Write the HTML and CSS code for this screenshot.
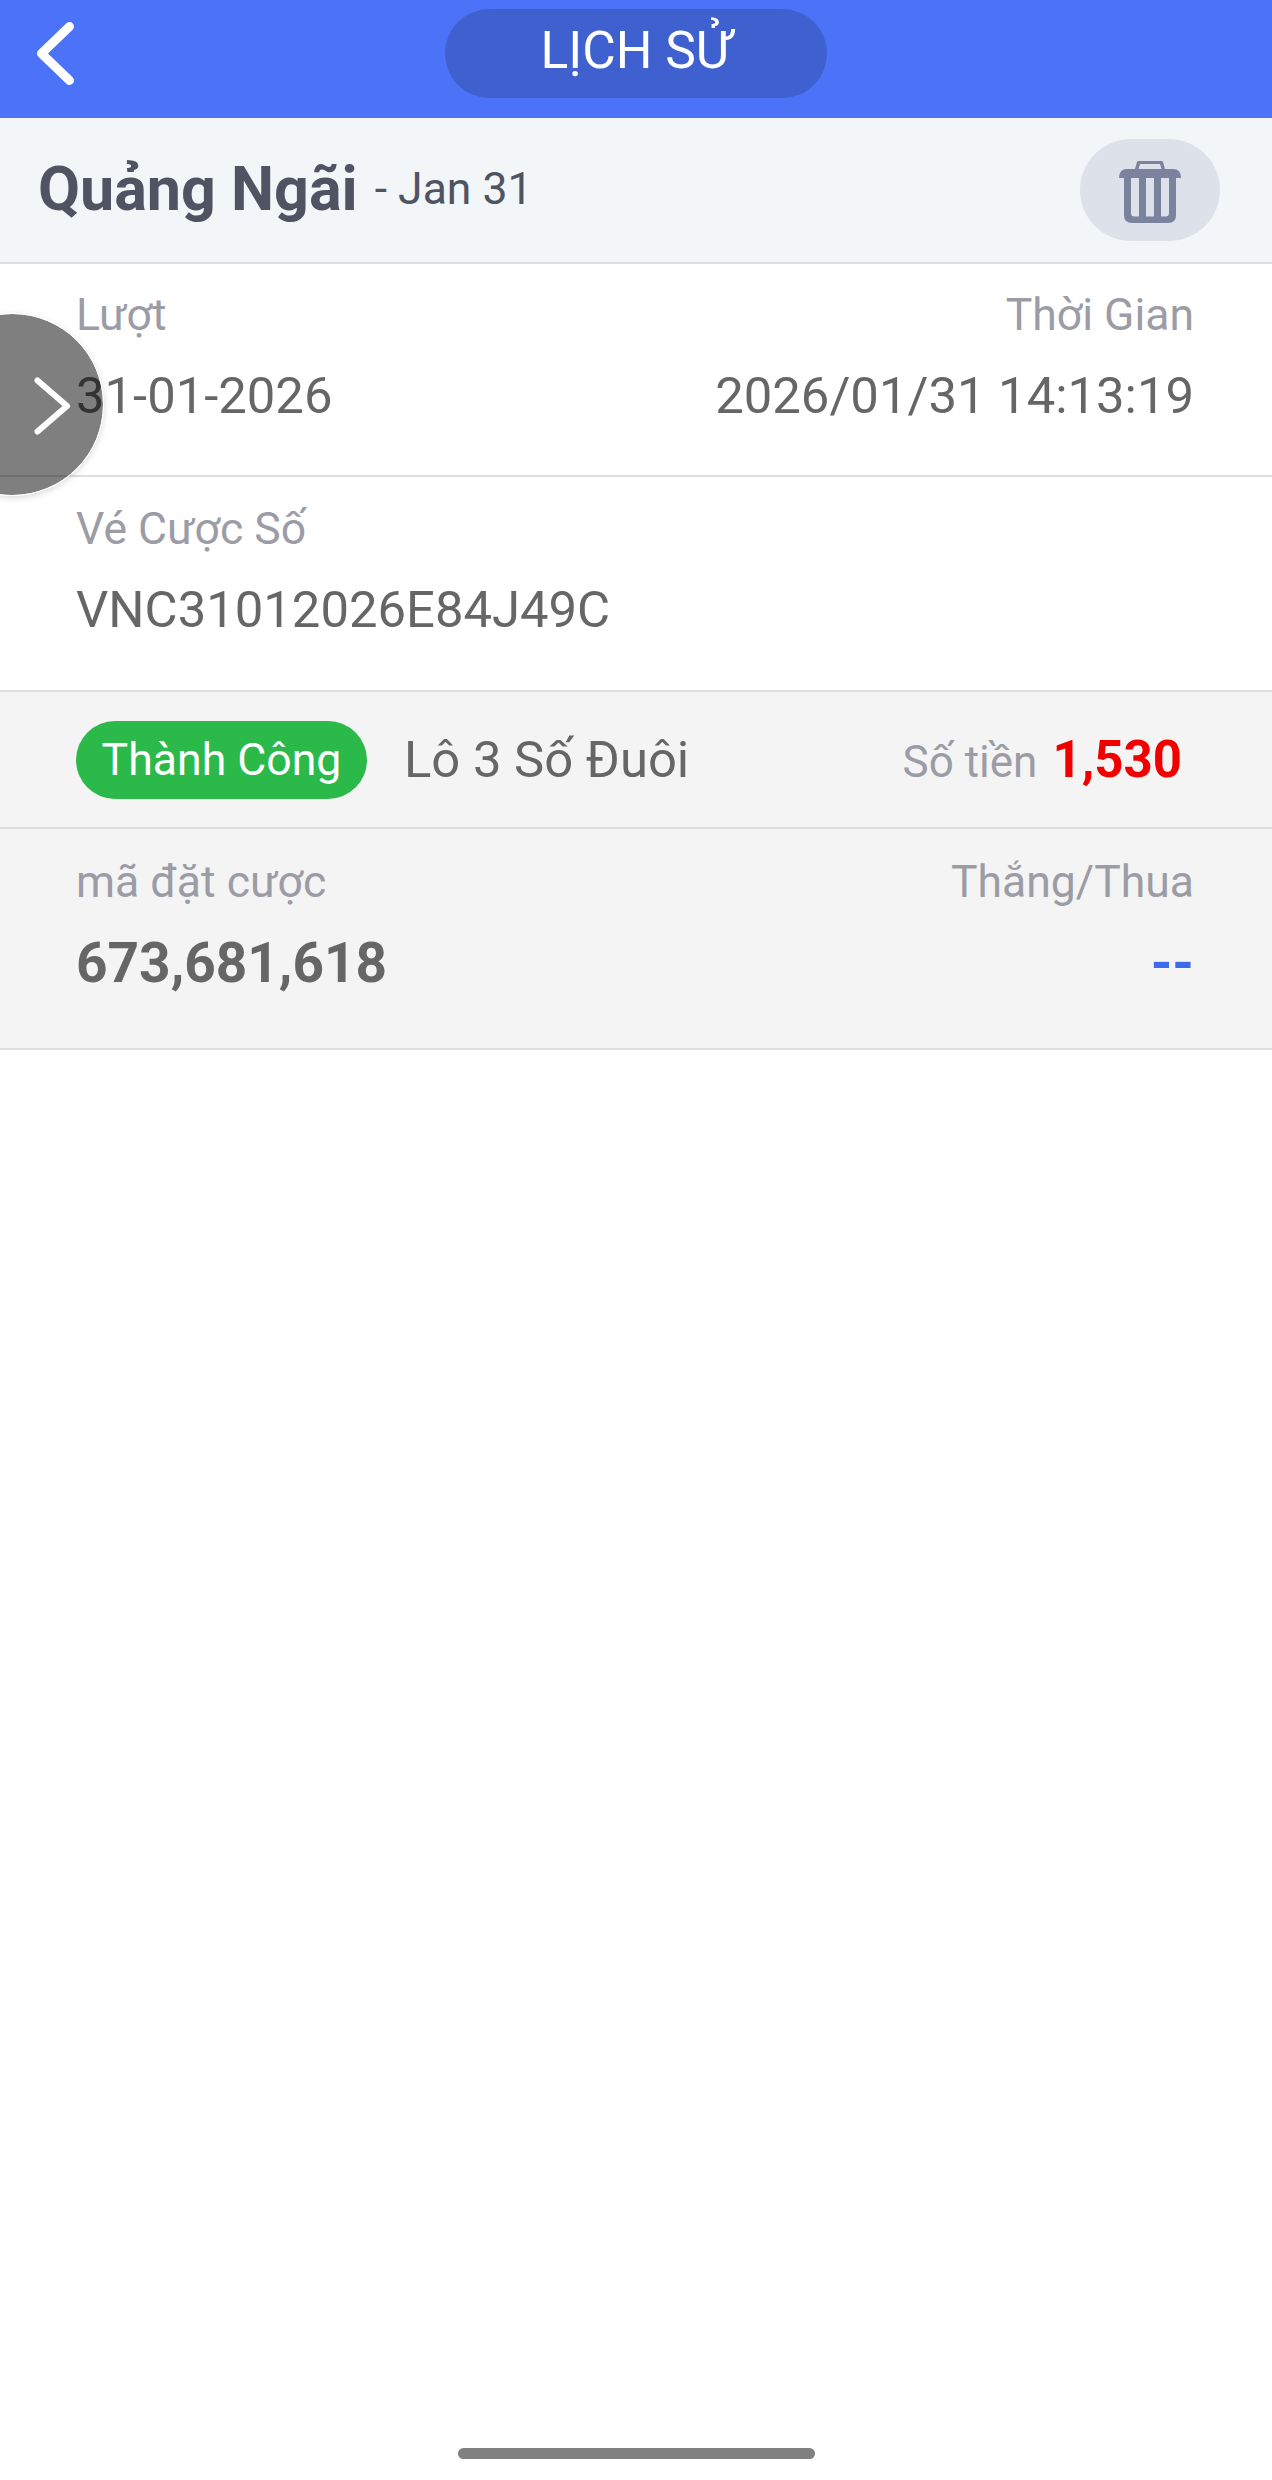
FILE: index.html
```html
<!DOCTYPE html>
<html lang="vi">
<head>
<meta charset="utf-8">
<title>Lịch sử</title>
<link rel="stylesheet" href="styles.css">
</head>
<body>
<div class="page">
  <header class="topbar">
    <svg class="back" width="37" height="63" viewBox="0 0 37 63"><path d="M32.5 4.500 L4.500 31.500 L32.500 58.500" /></svg>
    <div class="title-pill">LỊCH SỬ</div>
  </header>
  <section class="subhead">
    <div class="subhead-text"><span class="region">Quảng Ngãi</span><span class="date">- Jan 31</span></div>
    <button class="trash-btn" type="button" aria-label="Xóa">
      <svg class="trash-icon" width="62" height="62" viewBox="0 0 62 62">
        <path class="trash-fill" fill-rule="evenodd" d="M16 8 L18 1 Q18.300 0 19.500 0 L42.500 0 Q43.700 0 44 1 L46 8 L54 8 Q62 8 62 17 L57 17 L57 54 Q57 62 49 62 L13 62 Q5 62 5 54 L5 17 L0 17 Q0 8 8 8 Z M19.500 8 L42.500 8 L41 3 L21 3 Z M12 17 L12 52 Q12 55.500 15.500 55.500 L20 55.500 L20 17 Z M27 17 L27 55.500 L35 55.500 L35 17 Z M42 17 L42 55.500 L46.500 55.500 Q50 55.500 50 52 L50 17 Z"/>
      </svg>
    </button>
  </section>
  <section class="row row-time">
    <div class="col"><div class="label">Lượt</div><div class="value">31-01-2026</div></div>
    <div class="col col-end"><div class="label">Thời Gian</div><div class="value">2026/01/31 14:13:19</div></div>
  </section>
  <section class="row row-ticket">
    <div class="col"><div class="label">Vé Cược Số</div><div class="value">VNC31012026E84J49C</div></div>
  </section>
  <section class="row row-status grey">
    <span class="badge">Thành Công</span>
    <span class="game">Lô 3 Số Đuôi</span>
    <span class="amount"><span class="amount-label">Số tiền</span><b class="amount-value">1,530</b></span>
  </section>
  <section class="row row-bet grey">
    <div class="col"><div class="label">mã đặt cược</div><div class="value strong">673,681,618</div></div>
    <div class="col col-end"><div class="label">Thắng/Thua</div><div class="value strong blue">--</div></div>
  </section>
  <div class="home-bar"></div>
  <div class="bubble">
    <svg width="37" height="58" viewBox="0 0 37 58"><path d="M3.500 3.500 L33 29 L3.500 54.500"/></svg>
  </div>
</div>
</body>
</html>
```

FILE: styles.css
```css
* { box-sizing: border-box; }
html, body { margin: 0; padding: 0; background: #fff; }
body { font-family: Roboto, "Noto Sans", sans-serif; }

.page {
  position: relative;
  width: 1272px;
  min-height: 2480px;
  display: flex;
  flex-direction: column;
  overflow: hidden;
}

.topbar {
  height: 118px;
  flex: none;
  background: #4c73f7;
  display: flex;
  justify-content: center;
  padding-top: 9px;
  position: relative;
}
.back {
  position: absolute;
  left: 37px;
  top: 22px;
}
.back path { fill: none; stroke: #fff; stroke-width: 9; stroke-linecap: round; stroke-linejoin: round; }
.title-pill {
  width: 382px;
  height: 89px;
  border-radius: 45px;
  background: #3f60cf;
  color: #fff;
  font-size: 51.5px;
  line-height: 84px;
  text-align: center;
}

.subhead {
  height: 146px;
  flex: none;
  background: #f2f6f8;
  border-bottom: 2px solid #dedede;
  display: flex;
  align-items: center;
  justify-content: space-between;
  padding: 0 52px 0 38px;
}
.subhead-text { display: flex; align-items: center; gap: 17px; margin-top: -2px; }
.region { font-size: 61px; font-weight: 700; color: #4f5362; }
.date { font-size: 44.5px; color: #4f5362; }
.trash-btn {
  width: 140px;
  height: 102px;
  border: 0;
  padding: 0;
  border-radius: 51px;
  background: #dde1ea;
  display: flex;
  align-items: center;
  justify-content: center;
}
.trash-icon { margin-top: 4px; }
.trash-fill { fill: #7a829e; }

.row {
  flex: none;
  display: flex;
  justify-content: space-between;
  padding: 26px 78px 0 76px;
  border-bottom: 2px solid #dedede;
}
.row-time { height: 213px; }
.row-ticket { height: 215px; padding-top: 27px; }
.row-status { height: 137px; align-items: center; padding-top: 0; padding-right: 90px; justify-content: flex-start; }
.row-bet { height: 221px; padding-top: 28px; }
.grey { background: #f4f4f4; }

.col { display: flex; flex-direction: column; gap: 26px; }
.col-end { align-items: flex-end; }
.label { font-size: 44.5px; line-height: 50px; color: #9b9ca6; }
.value { font-size: 50.8px; line-height: 60px; color: #666; }
.strong { font-weight: 700; font-size: 55px; color: #666; }
.blue { color: #3f6be8; }

.badge {
  width: 291px;
  height: 78px;
  border-radius: 39px;
  background: #2bba4a;
  color: #fff;
  font-size: 44.6px;
  line-height: 78px;
  text-align: center;
}
.game { margin-left: 37px; font-size: 50.8px; color: #666; }
.amount { margin-left: auto; display: flex; align-items: baseline; gap: 15px; }
.amount-label { font-size: 44px; color: #9b9ca6; }
.amount-value { font-size: 51px; color: #f20000; }

.home-bar {
  width: 357px;
  height: 11px;
  border-radius: 6px;
  background: #808080;
  margin: auto auto 21px;
}

.bubble {
  position: absolute;
  left: -79px;
  top: 313px;
  width: 183px;
  height: 183px;
  border-radius: 50%;
  background: rgba(0, 0, 0, 0.5);
  background-clip: padding-box;
  border: 1px solid #fff;
  box-shadow: 0 2px 6px rgba(0, 0, 0, 0.15);
}
.bubble svg { position: absolute; left: 112px; top: 63px; }
.bubble path { fill: none; stroke: #fff; stroke-width: 6; stroke-linecap: round; stroke-linejoin: round; }
```
